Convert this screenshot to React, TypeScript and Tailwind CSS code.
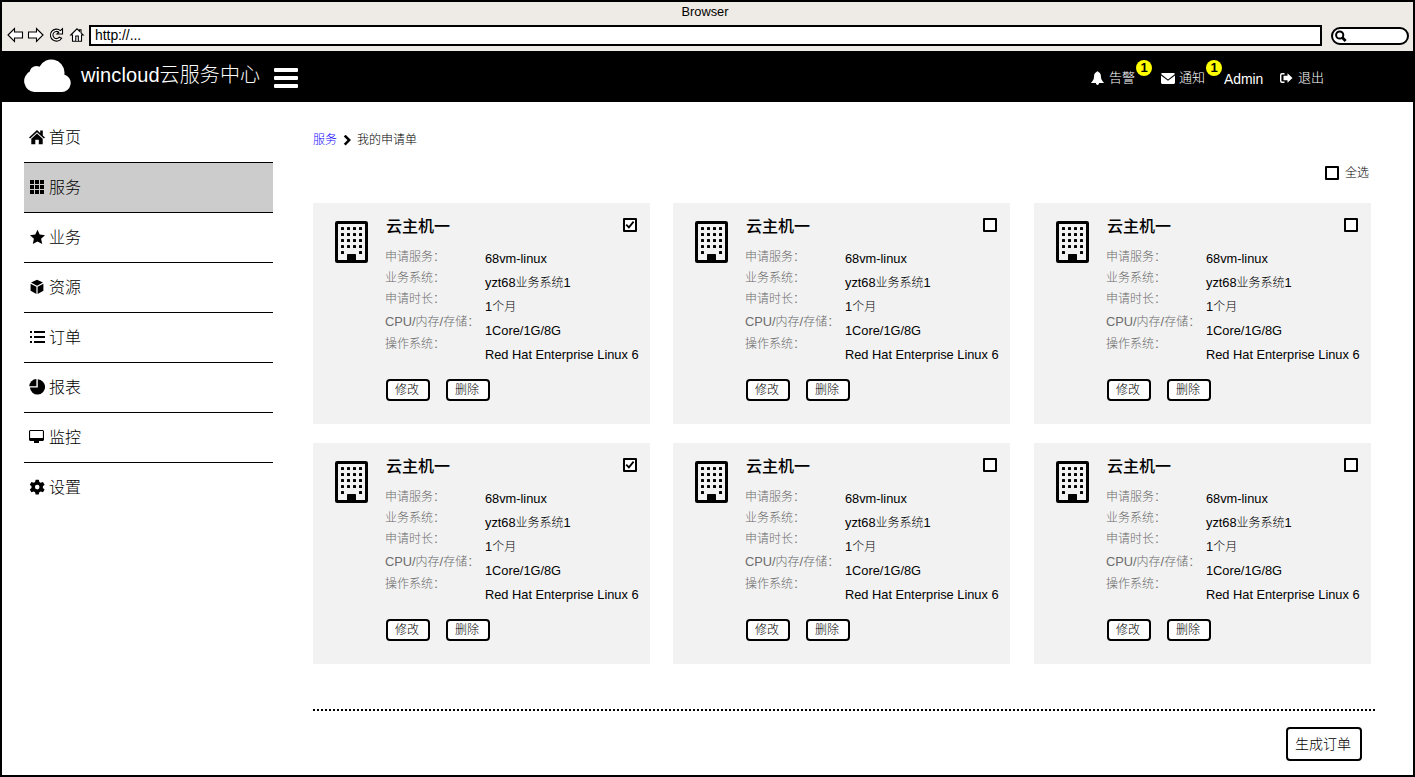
import type { ReactNode } from 'react';

/** Latin runs are set slightly larger than the Chinese text around them. */
function T({ children }: { children: string }) {
  return (
    <>
      {children.split(/([\x20-\x7e]+)/).filter(Boolean).map((run, i) => (
        <span
          key={i}
          className={/^[\x20-\x7e]/.test(run) ? 'text-[1.07em] leading-none tracking-[-0.02px]' : ''}
        >
          {run}
        </span>
      ))}
    </>
  );
}

function ToolbarIcons() {
  return (
    <svg className="mt-[1px] h-[18px] w-[78px]" viewBox="0 0 78 18" fill="white" stroke="black" strokeWidth="1.1">
      <path d="M1 9 L7.5 2.5 V6 H15.5 V12 H7.5 V15.5 Z" />
      <path d="M36 9 L29.5 2.5 V6 H21.5 V12 H29.5 V15.5 Z" />
      <path d="M55.5 2.8 V8 H50 L51.8 6.2 A3.6 3.6 0 1 0 52.4 11.2 L54.6 12.2 A6 6 0 1 1 53.4 4.6 Z" />
      <path d="M63.8 9 L70 2.8 L72.5 5.2 V3.8 H74 V6.8 L76.2 9 H74.5 V15.3 H65.5 V9 Z" />
      <path d="M68.8 15 V10 H71.3 V15" />
    </svg>
  );
}

const navIcons: Record<string, ReactNode> = {
  home: (
    <>
      <path d="M0 8.4 L8 1 L11.2 4 V1.6 H13.8 V6.4 L16 8.4 L14.9 9.6 L8 3.3 L1.1 9.6 Z" />
      <path d="M2.3 9.7 L8 4.5 L13.7 9.7 V15.3 H9.8 V10.8 H6.3 V15.3 H2.3 Z" />
    </>
  ),
  grid: <path d="M1 1h4v4H1zM6 1h4v4H6zM11 1h4v4h-4zM1 6h4v4H1zM6 6h4v4H6zM11 6h4v4h-4zM1 11h4v4H1zM6 11h4v4H6zM11 11h4v4h-4z" />,
  star: <path d="M8.5 .8 L10.7 5.6 L16 6.2 L12.1 9.8 L13.2 15 L8.5 12.4 L3.8 15 L4.9 9.8 L1 6.2 L6.3 5.6 Z" />,
  cube: <path d="M8 .8 L14 3.6 L8 6.7 L2 3.6 Z M1.6 4.7 L7.4 7.7 V15 L1.6 11.8 Z M14.4 4.7 L8.6 7.7 V15 L14.4 11.8 Z" />,
  list: <path d="M1 2h2v2H1zM5 2h11v2H5zM1 7h2v2H1zM5 7h11v2H5zM1 12h2v2H1zM5 12h11v2H5z" />,
  pie: (
    <>
      <path d="M8.8 .3 A7.6 7.6 0 1 1 .9 8.6 H8.8 Z" />
      <path d="M7.4 0 V7.2 H.3 A7.4 7.4 0 0 1 7.4 0 Z" />
    </>
  ),
  monitor: <path fillRule="evenodd" d="M1 1 H14 L15 2 V11 L14 12 H10 V14 H5 V12 H1 L0 11 V2 Z M1.1 2.1 V9 H13.9 V2.1 Z" />,
  gear: (
    <path
      fillRule="evenodd"
      d="M6.6 .7 H9.8 L10.3 3 L11.7 3.8 L14 3 L15.6 5.7 L13.9 7.3 V8.9 L15.6 10.5 L14 13.2 L11.7 12.5 L10.3 13.3 L9.8 15.5 H6.6 L6.1 13.3 L4.7 12.5 L2.4 13.2 L.8 10.5 L2.5 8.9 V7.3 L.8 5.7 L2.4 3 L4.7 3.8 L6.1 3 Z M8.2 5.8 A2.3 2.3 0 1 0 8.2 10.4 A2.3 2.3 0 1 0 8.2 5.8 Z"
    />
  ),
};

const nav = [
  ['home', '首页'],
  ['grid', '服务'],
  ['star', '业务'],
  ['cube', '资源'],
  ['list', '订单'],
  ['pie', '报表'],
  ['monitor', '监控'],
  ['gear', '设置'],
];

function Sidebar() {
  return (
    <nav className="ml-[22px] mt-[11px] w-[249px] shrink-0">
      {nav.map(([icon, label], i) => (
        <div
          key={icon}
          className={`flex h-[50px] pl-[5px] text-[16px] leading-[50px] ${i < 7 ? 'border-b border-black' : ''} ${i === 1 ? 'bg-[#ccc]' : ''}`}
        >
          <svg className="mr-1 mt-[16px] h-4 w-4" viewBox="0 0 16 16" fill="black">
            {navIcons[icon]}
          </svg>
          <span>{label}</span>
        </div>
      ))}
    </nav>
  );
}

function Checkbox({ checked = false }: { checked?: boolean }) {
  return (
    <span className="flex h-[14px] w-[14px] shrink-0 items-center justify-center rounded-[1px] border-2 border-black bg-white">
      {checked && (
        <svg className="h-[10px] w-[10px]" viewBox="0 0 10 10" fill="none" stroke="black" strokeWidth="1.8">
          <path d="M1.2 4.6 L3.9 7.4 L8.6 1.6" />
        </svg>
      )}
    </span>
  );
}

function Building() {
  const dots: ReactNode[] = [];
  for (let row = 0; row < 5; row++)
    for (let col = 0; col < 4; col++)
      if (row < 4 || col === 0 || col === 3)
        dots.push(<rect key={`${row}${col}`} x={6 + col * 6} y={6 + row * 6} width="3" height="3" rx=".6" />);
  return (
    <svg className="mt-[18px] h-[42px] w-[33px] shrink-0" viewBox="0 0 33 42" fill="black">
      <rect x="1.5" y="1.5" width="30" height="39" rx=".7" fill="none" stroke="black" strokeWidth="3" />
      {dots}
      <rect x="12" y="33" width="9" height="8" rx=".6" />
    </svg>
  );
}

function SmallButton({ children }: { children: string }) {
  return (
    <button className="h-[22px] w-[44px] rounded-[4px] border-2 border-black bg-white pb-px pr-[2px] text-[12px] leading-[16px]">
      {children}
    </button>
  );
}

function Card({ checked }: { checked: boolean }) {
  return (
    <article className="flex h-[221px] w-[337px] bg-[#f2f2f2] pl-[22px]">
      <Building />
      <div className="ml-[18px] w-[264px]">
        <div className="flex h-[44px] justify-between pr-[13px] pt-[15px]">
          <h2 className="text-[16px] font-medium leading-[17px]">云主机一</h2>
          <Checkbox checked={checked} />
        </div>
        <div className="flex h-[132px]">
          <div className="-ml-px w-[100px] text-[12px] leading-[21px] text-[#6c6c6c]">
            <p className="h-[21px]"><T>申请服务：</T></p>
            <p className="h-[21px]"><T>业务系统：</T></p>
            <p className="h-[23px]"><T>申请时长：</T></p>
            <p className="h-[22px]"><T>CPU/内存/存储：</T></p>
            <p><T>操作系统：</T></p>
          </div>
          <div className="whitespace-nowrap text-[12px] leading-[24px]">
            <p><T>68vm-linux</T></p>
            <p><T>yzt68业务系统1</T></p>
            <p><T>1个月</T></p>
            <p><T>1Core/1G/8G</T></p>
            <p><T>Red Hat Enterprise Linux 6</T></p>
          </div>
        </div>
        <div className="flex gap-4">
          <SmallButton>修改</SmallButton>
          <SmallButton>删除</SmallButton>
        </div>
      </div>
    </article>
  );
}

function Badge() {
  return (
    <span className="-mt-[2px] flex h-4 w-4 items-center justify-center rounded-full bg-[#ff0] text-[13px] font-bold leading-4 text-black">
      1
    </span>
  );
}

function Header() {
  return (
    <header className="flex h-[51px] bg-black text-white">
      <svg className="ml-[22px] mt-[8px] h-[33px] w-[47px]" viewBox="0.5 0 47 33" fill="white">
        <path d="M11 33 A11 11 0 0 1 6.5 12.3 V11.5 A6.6 6.6 0 0 1 16 7.8 A13.2 13.2 0 0 1 41 13.2 Q41 14.5 40.8 15.4 A9 9 0 0 1 37.8 33 Z" />
      </svg>
      <h1 className="ml-[10px] w-[192px] text-[20px] leading-[49px] tracking-[0.1px]">wincloud云服务中心</h1>
      <svg className="mt-[17px] h-[20px] w-[25px]" viewBox="0 0 25 20" fill="white">
        <rect x="1" width="24" height="4" rx="1" />
        <rect x="1" y="8" width="24" height="4" rx="1" />
        <rect x="1" y="16" width="24" height="4" rx="1" />
      </svg>
      <div className="ml-[793px] flex pt-[11px] text-[13px] leading-[31px]">
        <svg className="mt-[9px] h-[14px] w-[14px]" viewBox="0.5 0 14 14" fill="white">
          <path d="M6 1 Q7 -.4 8 1 C10.4 2 10.4 4.3 10.6 6.7 C10.8 8.8 12 10 13.2 11.3 V12 H8.7 Q8.3 14 7 14 Q5.7 14 5.3 12 H.8 V11.3 C2 10 3.2 8.8 3.4 6.7 C3.6 4.3 3.6 2 6 1Z" />
        </svg>
        <span className="ml-[4px] w-[27px]">告警</span>
        <Badge />
        <svg className="ml-[9px] mt-[11px] h-[11px] w-[14px]" viewBox="0 0 14 11" fill="white">
          <path d="M1 0 H13 L14 1 L7 6.4 L0 1 Z M0 2.5 L7 7.8 L14 2.5 V10 L13 11 H1 L0 10 Z" />
        </svg>
        <span className="ml-[4px] w-[27px]">通知</span>
        <Badge />
        <span className="ml-[2px] mt-[2px] w-[56px]"><T>Admin</T></span>
        <svg className="mt-[11px] h-[10px] w-[13px]" viewBox="0 0 13 10" fill="white">
          <path d="M4.5 0 V1.4 H2.2 Q1.4 1.4 1.4 2.2 V7.8 Q1.4 8.6 2.2 8.6 H4.5 V10 H2 Q0 10 0 8 V2 Q0 0 2 0 Z" />
          <path d="M7.5 .3 L12.5 5 L7.5 9.7 V7.3 H3.5 V2.7 H7.5 Z" />
        </svg>
        <span className="ml-[5px]">退出</span>
      </div>
    </header>
  );
}

export default function App() {
  return (
    <div className="flex h-[777px] w-[1415px] flex-col overflow-hidden border-2 border-black bg-white font-['Liberation_Sans','Noto_Sans_CJK_SC',sans-serif] font-light text-black">
      <div className="h-[49px] shrink-0 bg-[#eeeae5]">
        <div className="h-[23px] pr-[5px] text-center text-[12px] leading-[20px]"><T>Browser</T></div>
        <div className="flex">
          <div className="ml-[5px] w-[82px]"><ToolbarIcons /></div>
          <div className="h-[21px] w-[1233px] border-2 border-black bg-white pl-[4px] text-[13px] leading-[17px]"><T>http://...</T></div>
          <div className="ml-[9px] mt-[2px] h-[18px] w-[78px] rounded-full border-2 border-black bg-white">
            <svg className="ml-[2px] mt-[1px] h-[13px] w-[13px]" viewBox="0 0 13 13" fill="none" stroke="black">
              <circle cx="4.7" cy="5" r="3.6" strokeWidth="2" />
              <path d="M7.5 7.8 L10.6 11" strokeWidth="2.8" />
            </svg>
          </div>
        </div>
      </div>
      <Header />
      <div className="flex">
        <Sidebar />
        <main className="ml-10 w-[1062px]">
          <div className="mt-[28px] flex h-[20px] text-[12px] leading-[21px]">
            <a className="w-[30px] text-[#1408ff]">服务</a>
            <svg className="mt-[5px] h-[11px] w-[9px]" viewBox="0 0 9 11" fill="none" stroke="black" strokeWidth="2.5">
              <path d="M1.7 .6 L6.2 5.1 L1.7 9.6" />
            </svg>
            <span className="ml-[5px]">我的申请单</span>
          </div>
          <div className="flex h-[53px] justify-end gap-[6px] pr-[6px] pt-[16px] text-[12px] leading-[15px]">
            <Checkbox />
            <span>全选</span>
          </div>
          <div className="grid grid-cols-[360px_361px_337px] gap-y-[19px]">
            {[true, false, false, true, false, false].map((checked, i) => (
              <Card key={i} checked={checked} />
            ))}
          </div>
          <div className="mt-[45px] h-[2px] bg-[repeating-linear-gradient(90deg,black_0_2px,transparent_2px_4px)]" />
          <div className="flex justify-end pr-[13px] pt-4">
            <button className="h-[34px] w-[76px] rounded-[4px] border-2 border-black bg-white pb-px pr-[2px] text-[14px] leading-[28px]">生成订单</button>
          </div>
        </main>
      </div>
    </div>
  );
}
